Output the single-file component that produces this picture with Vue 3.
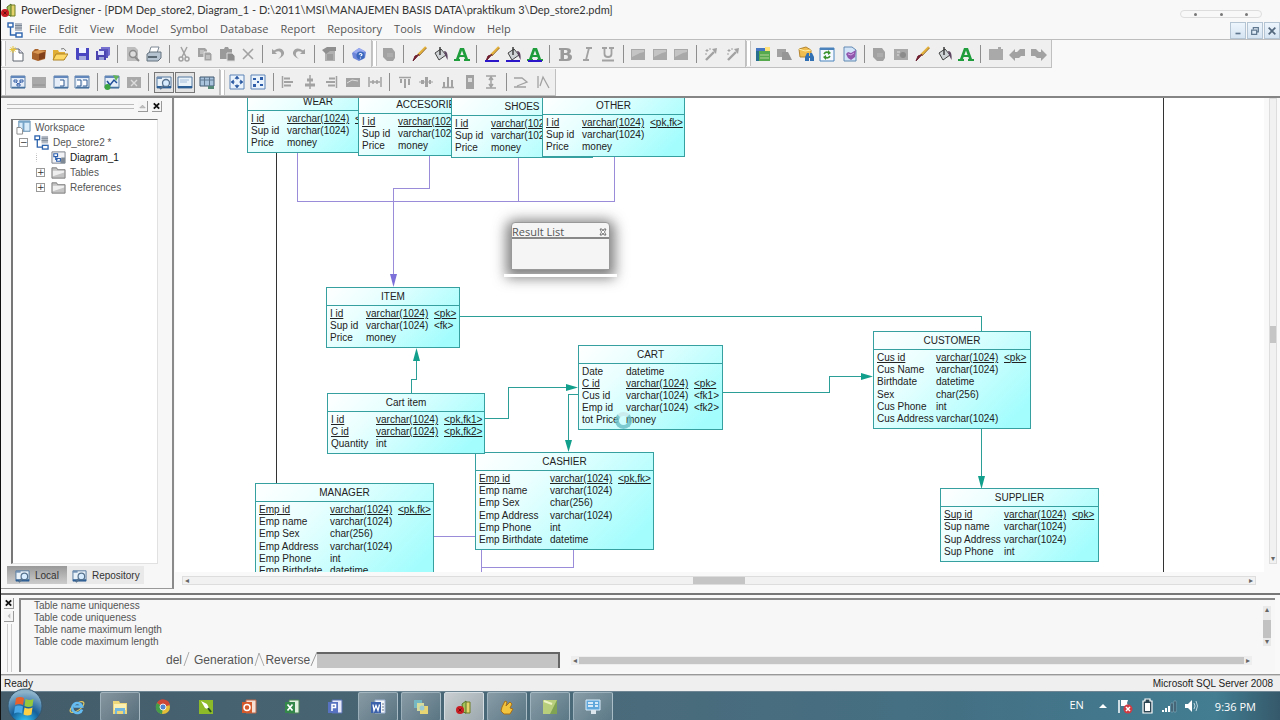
<script setup>
const sq = (a) => `<rect x="1" y="3" width="14" height="11" fill="#a9a9a9"/>${a || ''}`
const brush = '<path d="M15 1 7 9" stroke="#e2b13c" stroke-width="2.4"/><path d="M15.5 2 8 10" stroke="#8b5a1a" stroke-width=".8"/><path d="M8 8.5 3 14l-1 1 2-5z" fill="#7b1c2c" stroke="#6a2030"/>'
const bucket = '<path d="M3 7 9 3l5 6-7 5z" fill="#cfd3d6" stroke="#444"/><path d="M8 1v8" stroke="#333" stroke-width="1.4"/><path d="M12 5c3 0 4 3 3.5 9L13 9z" fill="#5c4660"/>'
const letterA = '<path d="M6 2h4l4 11h2v2h-6v-2h1l-.6-2H5.6L5 13h1v2H0v-2h2z M6.3 9h3.3L8 4.5z" fill="#1f9c3c" fill-rule="evenodd"/>'
const bar = '<rect x="1" y="14" width="14" height="2" fill="#2b17c9"/>'
const docs = '<path d="M1 3h14v11H1z" fill="#e9f1f9" stroke="#54789e"/><path d="M1 12h14v2H1z" fill="#2c5f96"/>'
const frame = '<path d="M1 2h14v12H1z" fill="#e4edf8" stroke="#5f81a8"/><path d="M1 2h14v2H1z" fill="#6288bb"/><path d="M2 13.5h13" stroke="#47719f" stroke-width="1.5"/>'
const gray = '#a2a2a2'
const icons = {
  app: '<path d="M9 3h5v11H9z" fill="#e4d36a" stroke="#6f7d25"/><path d="M6 5l4-3v12l-3-1z" fill="#a4c158" stroke="#59742b"/><circle cx="4" cy="11" r="4" fill="#c91c23"/><path d="M2.5 9.5l3 3m0-3-3 3" stroke="#611" />',
  erd: '<rect x="1" y="1" width="5" height="4" fill="#fff" stroke="#2c63ad" stroke-width="1.4"/><rect x="9" y="11" width="6" height="4" fill="#fff" stroke="#2c63ad" stroke-width="1.4"/><path d="M3.5 5v8H9" fill="none" stroke="#2c63ad" stroke-width="1.4"/><rect x="8" y="1" width="7" height="8" fill="#b4bac4"/><path d="M8 3.5h7M8 6h7" stroke="#7c8795"/>',
  newdoc: '<path d="M4 3h6l4 4v8H4z" fill="#fff" stroke="#61676e"/><path d="M10 3v4h4" fill="#dde" stroke="#61676e"/><path d="M4 0v7M.5 3.5h7M1.5 1.5l5 4M6.500 1.500l-5 4" stroke="#e8c53a"/>',
  book: '<path d="M1 6l3-3h3l1 1h7l-1 9-7 2-6-2z" fill="#a8622b"/><path d="M1 6l6 2 8-3-7-1z" fill="#d99955"/><path d="M8 8l6-2v6l-6 2z" fill="#814019"/>',
  open: '<path d="M1 4h5l1 2h6v8H1z" fill="#e0ad35"/><path d="M4 8h12l-4 6H1z" fill="#ffd965" stroke="#ad8326"/><path d="M9 3q3-2 5 2" fill="none" stroke="#777"/>',
  save: '<path d="M2 2h13v12H3l-1-1z" fill="#4a45c0"/><path d="M5 2h7v5H5z" fill="#f2f4ff"/><path d="M5 10h7v4H5z" fill="#a6adde"/>',
  saveall: '<path d="M6 1h9v8l-3 2H6z" fill="#7772cf"/><path d="M4 3h9v9H4z" fill="#5954bd"/><path d="M1 5h10v9H1z" fill="#4a43b0"/><path d="M3 5h6v4H3z" fill="#dfe2ff"/><path d="M4 11h5v3H4z" fill="#9ba2d8"/>',
  preview: `<path d="M2 1h8l3 3v11H2z" fill="#bdbdbd"/><circle cx="8" cy="8" r="3.500" fill="#ddd" stroke="#8b8b8b" stroke-width="1.500"/><path d="M10 11l4 4" stroke="#8b8b8b" stroke-width="2"/>`,
  print: '<path d="M5 1h8l-2 6H3z" fill="#fff" stroke="#7c8894"/><path d="M1 8l3-2h11v6l-3 3H1z" fill="#b5c2cf" stroke="#65727e"/><path d="M2 11h9" stroke="#3d4a56" stroke-width="1.500"/>',
  cut: `<path d="M5 1l5 10M11 1 6 11" stroke="${gray}" stroke-width="1.500"/><circle cx="5" cy="13" r="2" fill="none" stroke="${gray}" stroke-width="1.500"/><circle cx="11" cy="13" r="2" fill="none" stroke="${gray}" stroke-width="1.500"/>`,
  copy: `<path d="M1 2h7l2 2v7H1z" fill="${gray}"/><path d="M7 6h6l2 2v7H7z" fill="${gray}" stroke="#eee"/><path d="M3 5h4M3 7h3M9 10h4M9 12h4" stroke="#ddd"/>`,
  paste: `<path d="M1 3h4l1-2h3l1 2h3v10H1z" fill="#9a9a9a"/><path d="M8 7h5l3 3v5H8z" fill="#8d8d8d" stroke="#ddd"/>`,
  del: `<path d="M3 3l10 10M13 3 3 13" stroke="${gray}" stroke-width="1.600"/>`,
  undo: `<path d="M2 3v5h5L5 6q5-2 6 1t-3 6q7-3 6-7Q11 0 4 4.500z" fill="${gray}"/>`,
  redo: `<path d="M14 3v5H9l2-2q-5-2-6 1t3 6Q1 10 2 6q3-6 10-1.500z" fill="${gray}"/>`,
  prop: `<path d="M4 5h10v10H4z" fill="#b0b0b0"/><path d="M1 4l5-3h9v4H9L5 8z" fill="#8f8f8f"/><path d="M6 9h6M6 11h6M6 13h6" stroke="#888"/>`,
  help: '<path d="M1 7l7-5 7 4-1 6-6 3-6-3z" fill="#6d86d9"/><path d="M2 6l6-4 6 3-6 4z" fill="#9aaaf0"/><circle cx="9.500" cy="9.500" r="4" fill="#3b67bd"/><path d="M8 8.500q1.500-2 3 0 0 1-1.500 1.500M9.500 11.500v1" stroke="#fff" fill="none" stroke-width="1.200"/>',
  shape: `<path d="M2 2h9l3 4v6l-2 3H6l-4-4z" fill="${gray}"/><path d="M6 8h6M6 10h6" stroke="#b8b8b8"/>`,
  brush, bucket, letterA, brushB: brush + bar, bucketB: bucket + bar, letterB: letterA + bar,
  bold: `<path d="M2 2h7q5 0 5 3 0 2-2 3 3 .7 3 3 0 4-5 4H2v-2h1.500V4H2zM7 4v3h2q1.500-.2 1.500-1.500T9 4zM7 9v4h2q2 0 2-2T9 9z" fill="#9b9b9b" fill-rule="evenodd"/>`,
  italic: `<path d="M7 2h6M4 14h6M10 2 7 14" stroke="${gray}" stroke-width="1.800"/>`,
  under: `<path d="M2 2h5M9 2h5M4.500 2v6q0 3 3.500 3t3.500-3V2M2 14.500h12" stroke="${gray}" stroke-width="1.800" fill="none"/>`,
  pic: sq('<path d="M2 4h12v2l-4 1-8 4z" fill="#c4c4c4"/>'),
  wand: `<path d="M3 14l8-8" stroke="${gray}" stroke-width="2.400"/><path d="M9 3l5-1-1 6z" fill="${gray}"/><path d="M4 3v3M2.500 4.500h3M7 2v2M2 8h2" stroke="${gray}"/>`,
  grid: '<path d="M1 3h12v12H1z" fill="#286e8e"/><path d="M4 5h11v10H4z" fill="#57a94d"/><path d="M1 2h9v3H1z" fill="#4476c2"/><path d="M10 1h5v4h-5z" fill="#ffe27b"/><path d="M5 9h9M5 12h9" stroke="#b5d69b"/>',
  grayfile: `<path d="M1 3h9v8H1z" fill="${gray}"/><path d="M6 6h6l4 8H6z" fill="#969696"/>`,
  find: '<path d="M1 3l7-2 5 3v7H2z" fill="#f0be4e" stroke="#b48532"/><path d="M1 3l6 2 6-1" fill="none" stroke="#fff0a9"/><path d="M7 15v-4l2-4h2v3h1V7h2l2 4v4h-4v-3h-1v3z" fill="#3170b2"/>',
  refresh: '<path d="M1 2h14v13H1z" fill="#f5f9ff" stroke="#4b83bd"/><path d="M1 2h14v2H1z" fill="#4b83bd"/><path d="M5 8q2-3 5-1M11 10q-2 3-5 1" stroke="#3b922c" stroke-width="1.700" fill="none"/><path d="M9 4l3 3-3 2zM7 9v5l-3-3z" fill="#3b922c"/>',
  check: '<path d="M3 1h8l4 3v11H3z" fill="#d2e5f8" stroke="#6289b2"/><path d="M5 8l2-2 3 1 5-3-1 7-4 3-3-2z" fill="#9057ad"/><path d="M7 8l3 1 3-2" stroke="#d5a9e6" fill="none"/>',
  mon: sq('<path d="M4 6h3M4 9h2" stroke="#ddd"/><circle cx="10" cy="9" r="3" fill="#8b8b8b"/>'),
  plug: sq('<path d="M10 1h3v5h-3z" fill="#a9a9a9"/>'),
  left: `<path d="M0 9l6-6v3h2l3-3h5v7h-4l-2 2H6v3z" fill="${gray}"/>`,
  right: `<path d="M16 9l-6-6v3H8L5 3H0v7h4l2 2h4v3z" fill="${gray}"/>`,
  model: frame + '<path d="M4 6h3v2H4zM10 6h3v2h-3zM7 10h3v2H7zM6 8l2 2 3-2" stroke="#3660a8" fill="none"/>',
  dull: sq('<path d="M2 11h12" stroke="#909090"/>'),
  page1: frame + '<path d="M7 6h4v6H7" fill="#fff" stroke="#2f5a92"/>',
  page2: frame + '<path d="M3 6h4v6H3M9 6h4v6H9" fill="#fff" stroke="#2f5a92"/>',
  chart: frame + '<path d="M3 7l3 4 4-5 3 3" stroke="#224f99" stroke-width="1.500" fill="none"/><circle cx="3.500" cy="13" r="3" fill="#3ca542"/><path d="M9 1l6 1-3 5z" fill="#63b455"/>',
  dullx: sq('<path d="M5 6l6 6M11 6l-6 6" stroke="#ddd" stroke-width="1.400"/>'),
  explore: docs + '<circle cx="10" cy="9" r="3.500" fill="#d7ecff" stroke="#56728e" stroke-width="1.300"/><path d="M7 12l-3 3" stroke="#56728e" stroke-width="2"/><path d="M1 3h5v2H1z" fill="#7190b3"/>',
  output: docs + '<path d="M3 6h9M3 8h7" stroke="#a5bfdc"/>',
  table: '<path d="M1 3h14v9H1z" fill="#a9c3dd" stroke="#3f5870"/><path d="M1 6h14M5.500 3v9M10.500 3v9" stroke="#5f7890"/><path d="M9 12h6v3H9z" fill="#587"/>',
  expand: '<path d="M1 1h14v14H1z" fill="#eaf2fc" stroke="#5e84b6"/><path d="M8 3v3M8 10v3M3 8h3M10 8h3M6 4.500 8 2l2 2.500zM6 11.500 8 14l2-2.500zM4.500 6 2 8l2.500 2zM11.500 6 14 8l-2.500 2z" stroke="#2755a0" fill="#2755a0" stroke-width=".6"/>',
  spread: '<path d="M1 1h14v14H1z" fill="#eaf2fc" stroke="#5e84b6"/><path d="M3 4h3v2H3zM10 3h3v3h-3zM3 10h3v3H3zM10 10h3v2h-3zM7 7h2v2H7z" fill="#2e5ea9"/>',
  al: `<path d="M2.500 2v12" stroke="${gray}" stroke-width="1.500"/><path d="M4 3.500h6v2H4zM4 7h9v2H4zM4 10.500h7v2H4z" fill="${gray}"/>`,
  ac: `<path d="M8 1v14" stroke="${gray}" stroke-width="1.500"/><path d="M5 4.500h6v3H5zM3 9.500h10v3H3z" fill="${gray}"/>`,
  ar: `<path d="M13.500 2v12" stroke="${gray}" stroke-width="1.500"/><path d="M6 3.500h6v2H6zM3 7h9v2H3zM5 10.500h7v2H5z" fill="${gray}"/>`,
  samew: `<path d="M1 4h14v9H1z" fill="${gray}"/><path d="M2 9l5-3 6 1" stroke="#ddd" fill="none"/>`,
  hsp: `<path d="M2 3v10M14 3v10M3 8h10M6 6v4M10 6v4" stroke="${gray}" stroke-width="1.500"/>`,
  at: `<path d="M2 3.500h12" stroke="${gray}" stroke-width="1.500"/><path d="M3 5h2v4H3zM7 5h2v9H7zM11 5h2v6h-2z" fill="${gray}"/>`,
  am: `<path d="M1 8h14" stroke="${gray}"/><path d="M3 6h3v4H3zM7 3h3v10H7zM11 6h2v4h-2z" fill="${gray}"/>`,
  ab: `<path d="M2 13.500h12" stroke="${gray}" stroke-width="1.500"/><path d="M3 8h2v5H3zM7 3h2v10H7zM11 6h2v7h-2z" fill="${gray}"/>`,
  sameh: `<path d="M4 1h8v14H4z" fill="${gray}"/><path d="M6 4h4v4H6z" fill="#ddd"/>`,
  vsp: `<path d="M3 2h10M3 14h10M8 3v10M6 6l2-3 2 3M6 10l2 3 2-3" stroke="${gray}" stroke-width="1.500" fill="none"/>`,
  fh: `<path d="M1 4h8l5 4-10 4M1 13h12" stroke="${gray}" fill="none" stroke-width="1.300"/>`,
  fv: `<path d="M3 2v12M5 12l3-9 6 11" stroke="${gray}" fill="none" stroke-width="1.300"/>`,
  diagram: '<path d="M1 2h14v12H1z" fill="#f0f2f5" stroke="#777f89"/><path d="M3 4h4v3H3zM6 9h4v3H6zM5 7v3h2" stroke="#2c5fae" stroke-width="1.200" fill="#fff"/><path d="M11 8h4v6h-5z" fill="#7f8995"/>',
  folder: '<path d="M1 3h5l1 2h8v9H1z" fill="#c3c3c3" stroke="#7c7c7c"/><path d="M2 6h12v2L2 12z" fill="#efefef"/>',
  workspace: '<path d="M3 1h12v11H3z" fill="#d9ecfa" stroke="#5c87ab"/><path d="M3 1h12v2H3zM7 3h2v9H7z" fill="#77a5c8"/><path d="M1 8h4l2 2v5H1z" fill="#fff" stroke="#888"/>',
  ie: '<ellipse cx="8" cy="8" rx="8" ry="3.500" transform="rotate(-35 8 8)" fill="none" stroke="#e5cb62" stroke-width="1.200"/><path d="M13 10.500A5 5 0 1 1 13 7.500H5" fill="none" stroke="#65bcf1" stroke-width="2.600"/>',
  explorer: '<path d="M1 2h6l1 2h7v11H1z" fill="#eed77a"/><path d="M2 5h12v6H2z" fill="#fbefb1"/><path d="M3 9h10v6h-2v-3H5v3H3z" fill="#72b7df"/>',
  chrome: '<circle cx="8" cy="8" r="7" fill="#e3bd37"/><path d="M8 8 2 4A7 7 0 0 1 15 6z" fill="#ce4636"/><path d="M8 8 2 4a7 7 0 0 0 5 11z" fill="#439d49"/><circle cx="8" cy="8" r="3" fill="#5085d3" stroke="#eee"/>',
  corel: '<path d="M1 1h14v14H1z" fill="#8cba28"/><path d="M3 2l6 3 3 6-5-2z" fill="#fff"/><path d="M10 9l3 4" stroke="#28511a" stroke-width="2"/>',
  ppt: '<path d="M5 1h10v13H5z" fill="#f6dfd5" stroke="#bc6746"/><path d="M1 3h10v11H1z" fill="#d55a2b"/><circle cx="6" cy="8.500" r="3" fill="none" stroke="#fff" stroke-width="1.500"/>',
  excel: '<path d="M5 1h10v13H5z" fill="#e1f1df" stroke="#4b8552"/><path d="M1 3h10v11H1z" fill="#34894a"/><path d="M3.500 5.500l5 6m0-6-5 6" stroke="#fff" stroke-width="1.700"/>',
  pub: '<path d="M5 1h10v13H5z" fill="#e5e9fa" stroke="#5971b2"/><path d="M1 3h10v11H1z" fill="#5672c0"/><path d="M5 12V5.500h3.500v3H5" fill="none" stroke="#fff" stroke-width="1.500"/>',
  word: '<path d="M5 1h10v13H5z" fill="#f4f7fc" stroke="#9eb1d1"/><path d="M1 3h10v11H1z" fill="#3c62ac"/><path d="M3 5.500l1 6 2-5 2 5 1.500-6" fill="none" stroke="#fff" stroke-width="1.300"/><path d="M12 5h2M12 8h2M12 11h2" stroke="#678"/>',
  notes: '<path d="M1 1h8v8H1z" fill="#75b8c4"/><path d="M4 4h7v8H4z" fill="#d5db9d"/><path d="M7 7h8v8H7z" fill="#e7d473"/><circle cx="9" cy="9" r="2.500" fill="#9bcbd2"/>',
  hand: '<path d="M3 8l3-6 2 1-1 4 4-4 2 2-2 4 3 1-3 5H5l-3-3z" fill="#f3c53e" stroke="#a87018"/>',
  sticky: '<path d="M1 1h14v14H1z" fill="#b9ce7d"/><path d="M15 1v14H8z" fill="#7fa253"/><path d="M2 2l8 3" stroke="#eef3c5" stroke-width="2"/>',
  panel: '<path d="M1 1h14v10H1z" fill="#60a8dc" stroke="#d8ecfb"/><path d="M3 4h5M3 7h5M10 4h3M10 7h3" stroke="#fff" stroke-width="1.500"/><path d="M6 11h5v4H6z" fill="#dde6ec"/>',
}
const S = '|'
const rowOne = [
  { cls: 'files', name: 'Standard', items: ['newdoc', 'book', 'open', 'save', 'saveall', S, 'preview', 'print', S, 'cut', 'copy', 'paste', 'del', S, 'undo', 'redo', S, 'prop', S, 'help'] },
  { cls: 'format', name: 'Format', items: ['shape', S, 'brush', 'bucket', 'letterA', S, 'brushB', 'bucketB', 'letterB', S, 'bold', 'italic', 'under', S, 'pic', 'pic', 'pic', S, 'wand', 'wand'] },
  { cls: 'repo', name: 'Repository', items: ['grid', 'grayfile', 'find', 'refresh', 'check', S, 'shape', 'mon', 'brush', 'bucket', 'letterA', S, 'plug', 'left', 'right'] },
]
const rowTwo = [
  { cls: 'views', name: 'View', items: ['model', 'dull', 'page1', 'page2', S, 'chart', 'dullx', S, 'explore', 'output', 'table'] },
  { cls: 'layout', name: 'Layout', items: ['expand', 'spread', S, 'al', 'ac', 'ar', 'samew', 'hsp', S, 'at', 'am', 'ab', 'sameh', 'vsp', S, 'fh', 'fv'] },
]
const bars = [rowOne, rowTwo]
const menus = ['File', 'Edit', 'View', 'Model', 'Symbol', 'Database', 'Report', 'Repository', 'Tools', 'Window', 'Help']

const V = 'varchar(1024)'
const goods = [['I id', V, '<pk,fk>', 1], ['Sup id', V], ['Price', 'money']]
const emp = [['Emp id', V, '<pk,fk>', 1], ['Emp name', V], ['Emp Sex', 'char(256)'], ['Emp Address', V], ['Emp Phone', 'int'], ['Emp Birthdate', 'datetime']]
const nodes = [
  { t: 'WEAR', x: 72, y: -6, w: 142, h: 61, c: 40, rows: goods },
  { t: 'ACCESORIES', x: 183, y: -3, w: 142, h: 61, c: 40, rows: goods },
  { t: 'SHOES', x: 276, y: -1, w: 142, h: 61, c: 40, rows: goods },
  { t: 'OTHER', x: 367, y: -2, w: 143, h: 61, c: 40, rows: goods },
  { t: 'ITEM', x: 151, y: 189, w: 134, h: 61, c: 40, rows: [['I id', V, '<pk>', 1], ['Sup id', V, '<fk>'], ['Price', 'money']] },
  { t: 'CASHIER', x: 300, y: 354, w: 179, h: 98, c: 75, rows: emp },
  { t: 'Cart item', x: 152, y: 295, w: 158, h: 61, c: 49, rows: [['I id', V, '<pk,fk1>', 1], ['C id', V, '<pk,fk2>', 1], ['Quantity', 'int']] },
  { t: 'CART', x: 403, y: 247, w: 145, h: 85, c: 48, rows: [['Date', 'datetime'], ['C id', V, '<pk>', 1], ['Cus id', V, '<fk1>'], ['Emp id', V, '<fk2>'], ['tot Price', 'money']] },
  { t: 'MANAGER', x: 80, y: 385, w: 179, h: 98, c: 75, rows: emp },
  { t: 'CUSTOMER', x: 698, y: 233, w: 158, h: 98, c: 63, rows: [['Cus id', V, '<pk>', 1], ['Cus Name', V], ['Birthdate', 'datetime'], ['Sex', 'char(256)'], ['Cus Phone', 'int'], ['Cus Address', V]] },
  { t: 'SUPPLIER', x: 765, y: 390, w: 159, h: 74, c: 64, rows: [['Sup id', V, '<pk>', 1], ['Sup name', V], ['Sup Address', V], ['Sup Phone', 'int']] },
]
const box = (n) => ({ left: n.x + 'px', top: n.y + 'px', width: n.w + 'px', height: n.h + 'px' })
const messages = ['Table name uniqueness', 'Table code uniqueness', 'Table name maximum length', 'Table code maximum length']
const tasks = [['ie'], ['explorer', 1], ['chrome'], ['corel'], ['ppt'], ['excel'], ['pub'], ['word', 1], ['notes', 1], ['app', 2], ['hand', 1], ['sticky', 1], ['panel', 1]]
</script>

<template>
  <div class="window">
    <header class="title">
      <svg viewBox="0 0 16 16" v-html="icons.app"></svg>
      <h1>PowerDesigner - [PDM Dep_store2, Diagram_1 - D:\2011\MSI\MANAJEMEN BASIS DATA\praktikum 3\Dep_store2.pdm]</h1>
      <div class="pill"><i></i><i></i><i></i></div>
    </header>
    <nav class="menu">
      <svg viewBox="0 0 16 16" v-html="icons.erd"></svg>
      <button v-for="m in menus" :key="m">{{ m }}</button>
      <div class="mdi">
        <button aria-label="Minimize"><svg viewBox="0 0 12 12"><path d="M3 9h6" stroke="#60788f" stroke-width="2" /></svg></button>
        <button aria-label="Restore"><svg viewBox="0 0 12 12"><path d="M4 4V2h6v5H8M2 5h6v5H2z" fill="none" stroke="#60788f" stroke-width="1.5" /></svg></button>
        <button aria-label="Close"><svg viewBox="0 0 12 12"><path d="M2 2l8 8m0-8L2 10" stroke="#53687d" stroke-width="2" /></svg></button>
      </div>
    </nav>
    <div v-for="(row, r) in bars" :key="r" class="bars">
      <div v-for="b in row" :key="b.cls" class="bar" :class="b.cls" role="toolbar" :aria-label="b.name">
        <span class="grip"></span>
        <template v-for="(k, i) in b.items" :key="i">
          <span v-if="k === S" class="sep"></span>
          <button v-else :aria-label="k" :class="{ pressed: k === 'explore' || k === 'output' }"><svg viewBox="0 0 16 16" v-html="icons[k]"></svg></button>
        </template>
      </div>
    </div>

    <main>
      <aside>
        <div class="panehead">
          <span class="lines"></span>
          <button aria-label="Collapse"><svg viewBox="0 0 10 10"><path d="M2 7l3-3 3 3z" fill="#c4c4c4" stroke="#999" stroke-width=".6" /></svg></button>
          <button aria-label="Close pane"><svg viewBox="0 0 10 10"><path d="M2 2l6 6m0-6L2 8" stroke="#111" stroke-width="2" /></svg></button>
        </div>
        <ul class="tree">
          <li><svg viewBox="0 0 16 16" v-html="icons.workspace"></svg>Workspace</li>
          <li class="l1"><span class="tog">−</span><svg viewBox="0 0 16 16" v-html="icons.erd"></svg>Dep_store2 *</li>
          <li class="l2 active"><span class="tog none"></span><svg viewBox="0 0 16 16" v-html="icons.diagram"></svg>Diagram_1</li>
          <li class="l2"><span class="tog">+</span><svg viewBox="0 0 16 16" v-html="icons.folder"></svg>Tables</li>
          <li class="l2"><span class="tog">+</span><svg viewBox="0 0 16 16" v-html="icons.folder"></svg>References</li>
        </ul>
        <div class="panetabs">
          <button class="on"><svg viewBox="0 0 16 16" v-html="icons.explore"></svg>Local</button>
          <button><svg viewBox="0 0 16 16" v-html="icons.explore"></svg>Repository</button>
        </div>
      </aside>
      <section class="work">
        <div class="upper">
          <div class="canvas">
            <svg class="links">
              <g transform="translate(-175 -98)" fill="none" shape-rendering="crispEdges">
                <path d="M276.500 152V484M1163.500 97V575" stroke="#333" />
                <g stroke="#9a8cd8"><path d="M297.500 152V201.500H614.500V156M518.500 156V201M429.500 155V188.500H393.500V276M434 536.500H476M481.500 549V573M573.500 549V567.500H481" /></g>
                <g stroke="#2b9e98"><path d="M460 316.500H981.500V331M981.500 429V478M411.500 393V379.500H416.500V359M485 418.500H508.500V387.500H568M578 394.500H568.500V441M723 392.500H829.500V376.500H862" /></g>
              </g>
              <g transform="translate(-175 -98)">
                <path d="M390 274h7l-3.500 13z" fill="#7d70d8" />
                <path d="M413 361h7l-3.500-13zM566 384v7l12-3.500zM565 440h7l-3.500 12zM861 373v7l12-3.500zM978 476h7l-3.500 13z" fill="#12a08c" />
              </g>
            </svg>
            <article v-for="n in nodes" :key="n.t" class="node" :style="box(n)">
              <h2>{{ n.t }}</h2>
              <table>
                <colgroup><col :style="{ width: n.c - 4 + 'px' }"><col class="typecol"><col></colgroup>
                <tbody>
                  <tr v-for="r in n.rows" :key="r[0]" :class="{ key: r[3] }"><td>{{ r[0] }}</td><td>{{ r[1] }}</td><td>{{ r[2] }}</td></tr>
                </tbody>
              </table>
            </article>
            <span class="busy"></span>
            <section class="result">
              <header>Result List<button aria-label="Close results"><svg viewBox="0 0 8 8"><path d="M1 1h2l1 2 1-2h2L5.500 4 7 7H5L4 5 3 7H1l1.500-3z" fill="#fff" stroke="#555" stroke-width=".8" /></svg></button></header>
              <div></div>
            </section>
          </div>
          <div class="vscroll"><span class="thumb"></span><b>▾</b></div>
        </div>
        <div class="hscroll"><b>◂</b><span class="thumb"></span><b>▸</b></div>
      </section>
    </main>

    <section class="output">
      <div class="outgrip">
        <button aria-label="Close output"><svg viewBox="0 0 10 10"><path d="M2 2l6 6m0-6L2 8" stroke="#111" stroke-width="2" /></svg></button>
        <button aria-label="Collapse output"><svg viewBox="0 0 10 10"><path d="M7 2v6L4 5z" fill="#bbb" /></svg></button>
        <span></span>
      </div>
      <div class="outbody">
        <div class="outtop">
          <ul><li v-for="m in messages" :key="m">{{ m }}</li></ul>
          <div class="oscroll"><b>▴</b><span></span><b>▾</b></div>
        </div>
        <div class="outtabs">
          <button>del</button><svg viewBox="0 0 12 14"><path d="M2 14 7 0" stroke="#aaa" /></svg>
          <button>Generation</button><svg viewBox="0 0 12 14"><path d="M2 14 6 1l5 13" fill="none" stroke="#aaa" /></svg>
          <button>Reverse</button><svg class="last" viewBox="0 0 7 14"><path d="M1 14 7 0" stroke="#999" /></svg>
          <span class="fill"></span>
          <div class="ohs"><b>◂</b><span></span><b>▸</b></div>
        </div>
      </div>
    </section>

    <footer class="status"><span>Ready</span><span>Microsoft SQL Server 2008</span></footer>

    <div class="taskbar">
      <button class="orb" aria-label="Start">
        <svg viewBox="0 0 36 36">
          <defs><radialGradient id="orb" cx=".5" cy="1" r=".9"><stop offset="0" stop-color="#35d0ff" /><stop offset=".5" stop-color="#155f9a" /><stop offset="1" stop-color="#8db3cb" /></radialGradient></defs>
          <circle cx="18" cy="18" r="17" fill="url(#orb)" stroke="#36566c" />
          <path d="M9 10q4-2 8 0l-1 7q-4-2-8 0z" fill="#e8602c" /><path d="M18.500 11q4 2 8 0l-1 7q-4 2-8 0z" fill="#95c83d" />
          <path d="M8 18.500q4-2 8 0l-1 7q-4-2-8 0z" fill="#48a8e8" /><path d="M17.500 19.500q4 2 8 0l-1 7q-4 2-8 0z" fill="#fcd046" />
        </svg>
      </button>
      <button v-for="t in tasks" :key="t[0]" class="task" :class="{ run: t[1] === 1, cur: t[1] === 2 }" :aria-label="t[0]"><svg viewBox="0 0 16 16" v-html="icons[t[0]]"></svg></button>
      <div class="tray">
        <span class="lang">EN</span>
        <svg viewBox="0 0 16 16"><path d="M4 10l4-4 4 4z" fill="#fff" /></svg>
        <svg viewBox="0 0 16 16"><path d="M2 2v13" stroke="#fff" stroke-width="1.500" /><path d="M4 2h7l-1 3 1 3H4z" fill="#fff" /><circle cx="11" cy="11" r="4.500" fill="#d23a42" /><path d="M9 9l4 4m0-4-4 4" stroke="#fff" stroke-width="1.500" /></svg>
        <svg viewBox="0 0 16 16"><path d="M6 1h5v2h2v12H4V3h2z" fill="#2d4653" stroke="#fff" stroke-width="1.200" /><path d="M6 5h5v8H6z" fill="#fff" /></svg>
        <svg viewBox="0 0 16 16"><path d="M1 12h2v2H1zM4 10h2v4H4zM7 8h2v6H7z" fill="#fff" /><path d="M10 5h2v9h-2zM13 3h2v11h-2z" fill="#28485a" stroke="#8fb0bd" stroke-width=".6" /></svg>
        <svg viewBox="0 0 16 16"><path d="M2 6h3l4-4v12l-4-4H2z" fill="#fff" /><path d="M11 5q2 3 0 6M13 3q3 5 0 10" fill="none" stroke="#bcd6df" /></svg>
        <time>9:36 PM</time>
      </div>
    </div>
  </div>
</template>

<style>
html, body { margin: 0; height: 100%; overflow: hidden; }
#app { height: 100%; }
</style>

<style scoped>
* { box-sizing: border-box; }
button { border: 0; padding: 0; background: none; font: inherit; color: inherit; }
h1, h2, ul { margin: 0; padding: 0; font-weight: normal; list-style: none; }
svg { display: block; flex: none; }
.window { height: 100vh; display: flex; flex-direction: column; background: #f9f9f9; border-left: 1px solid #111; font: 10px "Liberation Sans", sans-serif; color: #555; overflow: hidden; }
.title { height: 20px; flex: none; display: flex; align-items: center; padding-right: 18px; background: #f8f8f8; }
.title svg { width: 16px; height: 16px; margin-right: 4px; }
.title h1 { font: 11px/20px "Lato", sans-serif; color: #333; white-space: nowrap; }
.pill { margin-left: auto; margin-top: 8px; width: 82px; height: 8px; border: 1px solid #ddd; border-radius: 4px; display: flex; align-items: center; justify-content: space-between; padding: 0 13px; }
.pill i { width: 3px; height: 3px; border-radius: 2px; background: #777; }
.menu { height: 20px; flex: none; display: flex; align-items: center; gap: 12px; padding-left: 6px; background: #f8f8f8; border-bottom: 1px solid #bdbdbd; font: 11px/15px "Open Sans", sans-serif; color: #555; }
.menu > svg { width: 16px; height: 16px; margin-right: -6px; }
.menu > button { padding-bottom: 2px; }
.mdi { margin-left: auto; align-self: flex-end; display: flex; gap: 1px; }
.mdi button { width: 16px; height: 17px; display: grid; place-items: center; background: linear-gradient(#edf5fc, #d5e4f2); border: 1px solid #b5c4d3; }
.mdi svg { width: 10px; height: 10px; }
.bars { height: 28px; flex: none; display: flex; }
.bars + .bars { height: 30px; padding-top: 1px; border-bottom: 2px solid #858585; }
.bar { display: flex; align-items: center; justify-content: space-between; background: #efefef; border: 1px solid #c0c0c0; border-width: 0 1px 1px 0; padding-right: 2px; }
.files { width: 371px; } .format { width: 374px; } .repo { width: 306px; }
.views { width: 219px; } .layout { width: 336px; }
.grip { width: 5px; height: 25px; border: 1px solid #c4c4c4; border-width: 0 1px; background: #fff; }
.bar .sep { width: 7px; height: 18px; border-left: 1px solid #8e8e8e; margin-left: 3px; margin-right: -3px; }
.bar button { width: 20px; height: 21px; display: grid; place-items: center; }
.bar button svg { width: 16px; height: 16px; }
.bar .pressed { background: #e4e4e4; border: 1px solid #777; }
main { flex: 1; min-height: 0; display: flex; border-bottom: 2px solid #777; }
aside { width: 173px; flex: none; display: flex; flex-direction: column; margin-bottom: 4px; border-right: 2px solid #8a8a8a; border-bottom: 1px solid #999; background: #f7f7f7; }
.panehead { height: 17px; display: flex; align-items: center; gap: 4px; padding: 0 10px 0 6px; }
.lines { flex: 1; height: 5px; border: 1px solid #bbb; border-width: 1px 0; }
.panehead button, .outgrip button { width: 10px; height: 11px; border: 1px solid #999; border-width: 0 1px 1px 0; background: #f5f5f5; }
.panehead svg, .outgrip svg { width: 9px; height: 10px; }
.tree { flex: 1; margin: 4px 14px 0 10px; border: 1px solid #e1e1e1; border-top: 1px solid #777; border-left: 2px solid #777; background: #fff; }
.tree li { display: flex; align-items: center; height: 15px; gap: 4px; padding-left: 3px; }
.tree li svg { width: 15px; height: 15px; }
.tree .l1 { padding-left: 6px; } .tree .l2 { padding-left: 23px; }
.tree .l1 svg, .tree .l2 svg { margin-left: 2px; }
.tree .active { color: #111; }
.tog { width: 9px; height: 9px; border: 1px solid #999; font: 9px/7px "DejaVu Sans", sans-serif; text-align: center; color: #333; background: #fff; }
.tog.none { border-color: transparent; border-left: 1px dotted #bbb; }
.panetabs { height: 24px; display: flex; align-items: flex-start; padding: 2px 0 0 6px; }
.panetabs button { display: flex; align-items: center; gap: 5px; height: 18px; padding: 0 4px 0 5px; background: #e9e9e9; color: #333; }
.panetabs .on { background: linear-gradient(#999, #ccc); padding: 0 8px; }
.panetabs svg { width: 15px; height: 15px; }
.work { flex: 1; min-width: 0; display: flex; flex-direction: column; }
.upper { flex: 1; min-height: 0; display: flex; }
.canvas { position: relative; flex: 1; overflow: hidden; background: #fff; margin-left: 1px; }
.links { position: absolute; inset: 0; width: 100%; height: 100%; }
.node { position: absolute; border: 1px solid #35a09f; background: linear-gradient(135deg, #fff 0%, #eaffff 30%, #a3fdfd 90%); color: #222; font: 10px "Liberation Sans", sans-serif; display: flex; flex-direction: column; overflow: hidden; }
.node h2 { height: 18px; flex: none; font-size: 10px; line-height: 17px; text-align: center; border-bottom: 1px solid #35a09f; }
.node table { flex: 1; margin: 2px 0 3px 3px; table-layout: fixed; width: calc(100% - 3px); border-collapse: collapse; line-height: 12px; }
.typecol { width: 68px; }
.node td { padding: 0; white-space: nowrap; }
.key td { text-decoration: underline; }
.busy { position: absolute; left: 440px; top: 314px; width: 17px; height: 17px; border-radius: 50%; border: 4px solid #69bfc7; border-top-color: #c9e8ea; opacity: .8; }
.result { position: absolute; left: 336px; top: 124px; width: 99px; height: 48px; background: #f5f5f5; border: 1px solid #999; border-radius: 4px 4px 0 0; box-shadow: 0 3px 13px 5px rgba(60, 60, 60, .65); display: flex; flex-direction: column; }
.result::after { content: ""; position: absolute; left: -8px; right: -8px; top: 51px; height: 3px; background: #fff; }
.result header { height: 16px; display: flex; justify-content: space-between; align-items: center; padding: 3px 2px 0 0; border-bottom: 2px solid #888; font: 11px "Open Sans", sans-serif; line-height: 13px; }
.result svg { width: 8px; height: 8px; }
b { font: 8px/8px "DejaVu Sans", sans-serif; color: #666; width: 8px; text-align: center; flex: none; }
.vscroll { width: 8px; margin: 0 3px 8px 5px; border: 1px solid #ddd; background: #f1f1f1; display: flex; flex-direction: column; align-items: center; justify-content: space-between; }
.vscroll .thumb { width: 6px; height: 17px; margin-top: 227px; background: #c5c5c5; }
.hscroll { height: 9px; margin: 4px 24px 8px 8px; border: 1px solid #ddd; background: #f1f1f1; display: flex; justify-content: space-between; align-items: center; }
.hscroll .thumb { width: 52px; height: 7px; background: #c5c5c5; }
.output { height: 80px; flex: none; display: flex; padding: 3px 5px 2px 3px; border-bottom: 1px solid #999; }
.outgrip { width: 15px; display: flex; flex-direction: column; gap: 2px; align-items: flex-start; }
.outgrip span { flex: 1; width: 5px; margin-left: 3px; border: 1px solid #ccc; border-width: 0 1px; }
.outbody { flex: 1; min-width: 0; border-top: 2px solid #888; border-left: 2px solid #888; display: flex; flex-direction: column; background: #f7f7f7; }
.outtop { display: flex; justify-content: space-between; flex: 1; min-height: 0; }
.outtop ul { padding: 0 0 0 13px; line-height: 12px; }
.oscroll { width: 8px; height: 40px; margin: 6px 4px 0 0; display: flex; flex-direction: column; background: #e9e9e9; }
.oscroll span { flex: 1; margin-top: 6px; background: #c2c2c2; }
.outtabs { display: flex; height: 16px; margin-bottom: 4px; padding-left: 145px; font: 12px "Liberation Sans", sans-serif; }
.outtabs > svg { width: 12px; height: 14px; }
.outtabs > .last { width: 7px; }
.fill { width: 243px; background: #c4c4c4; border: 2px solid #666; border-left: 0; border-bottom: 0; }
.ohs { flex: 1; display: flex; align-items: center; height: 9px; margin: 4px 23px 0 11px; background: #eee; }
.ohs span { flex: 1; height: 7px; background: #c6c6c6; }
.status { height: 16px; flex: none; border-top: 1px solid #ccc; background: #efefef; display: flex; justify-content: space-between; padding: 0 7px 0 3px; line-height: 16px; color: #222; }
.taskbar { height: 29px; flex: none; display: flex; gap: 3px; align-items: stretch; background: linear-gradient(90deg, #445c6a, #4a6b7b 50%, #447084 75%, #427d92 95%, #35596a); border-top: 1px solid #6e8694; }
.orb { width: 53px; height: 36px; margin: -4px 0 0; padding-left: 6px; z-index: 1; }
.orb svg { width: 36px; height: 36px; }
.task { width: 40px; height: 29px; display: grid; place-items: center; border-radius: 2px; }
.task svg { width: 16px; height: 16px; }
.run { background: linear-gradient(135deg, rgba(255,255,255,.35), rgba(255,255,255,.1)); border: 1px solid rgba(215,232,240,.5); }
.cur { background: linear-gradient(135deg, #c9ced1, #9ba8ae); border: 1px solid #d4dde1; }
.tray { margin-left: auto; display: flex; align-items: center; gap: 6px; padding-right: 24px; color: #fff; font: 11px "Open Sans", sans-serif; }
.tray svg { width: 16px; height: 16px; }
.lang { margin-right: 5px; padding-bottom: 4px; }
.tray time { margin-left: 10px; }
</style>
